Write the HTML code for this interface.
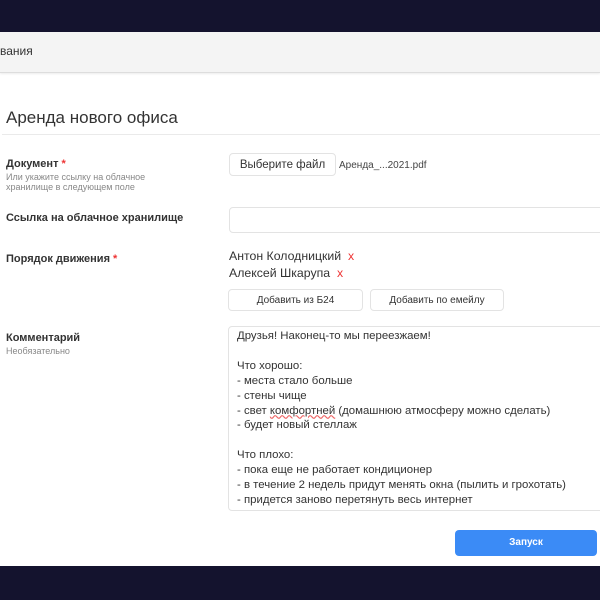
<html><head><style>
body{margin:0;width:600px;height:600px;overflow:hidden;background:#fff;font-family:"Liberation Sans",sans-serif;position:relative;color:#333}
.a{position:absolute}
.btn{position:absolute;border:1px solid #e3e3e3;border-radius:4px;background:#fff;font-size:11px;text-align:center;box-sizing:border-box;color:#333}
.lbl{font-size:11px;font-weight:bold;color:#333}
.sub{font-size:9px;color:#888;line-height:10px}
.r{color:#e33}
</style></head><body>
<div class="a" style="left:0;top:0;width:600px;height:32px;background:#14132e"></div>
<div class="a" style="left:0;top:32px;width:600px;height:40px;background:#f4f4f4;border-bottom:1px solid #ddd;box-shadow:0 1px 2px rgba(0,0,0,.08)"></div>
<div class="a" style="left:0;top:44px;font-size:12px;color:#333">вания</div>
<div class="a" style="left:6px;top:108px;font-size:17px;color:#333">Аренда нового офиса</div>
<div class="a" style="left:2px;top:134px;width:598px;height:1px;background:#eaeaea"></div>
<div class="a lbl" style="left:6px;top:158px">Документ <span class="r">*</span></div>
<div class="a sub" style="left:6px;top:172px">Или укажите ссылку на облачное<br>хранилище в следующем поле</div>
<div class="btn" style="left:229px;top:153px;width:107px;height:23px;line-height:22px;font-size:11.5px">Выберите файл</div>
<div class="a" style="left:339px;top:160px;font-size:10px;color:#444">Аренда_...2021.pdf</div>
<div class="a lbl" style="left:6px;top:212px">Ссылка на облачное хранилище</div>
<div class="btn" style="left:229px;top:207px;width:380px;height:26px"></div>
<div class="a lbl" style="left:6px;top:253px">Порядок движения <span class="r">*</span></div>
<div class="a" style="left:229px;top:249px;font-size:12.3px">Антон Колодницкий &nbsp;<span class="r">x</span></div>
<div class="a" style="left:229px;top:266px;font-size:12.3px">Алексей Шкарупа &nbsp;<span class="r">x</span></div>
<div class="btn" style="left:228px;top:289px;width:135px;height:22px;line-height:22px;font-size:10px">Добавить из Б24</div>
<div class="btn" style="left:370px;top:289px;width:134px;height:22px;line-height:22px;font-size:10px">Добавить по емейлу</div>
<div class="a lbl" style="left:6px;top:332px">Комментарий</div>
<div class="a sub" style="left:6px;top:346px">Необязательно</div>
<div class="btn" style="left:228px;top:326px;width:390px;height:185px;text-align:left;padding:2px 0 0 8px;font-size:11.4px;line-height:14.9px">Друзья! Наконец-то мы переезжаем!<br><br>Что хорошо:<br>- места стало больше<br>- стены чище<br>- свет <span style="text-decoration:underline wavy #e66">комфортней</span> (домашнюю атмосферу можно сделать)<br>- будет новый стеллаж<br><br>Что плохо:<br>- пока еще не работает кондиционер<br>- в течение 2 недель придут менять окна (пылить и грохотать)<br>- придется заново перетянуть весь интернет</div>
<div class="a" style="left:455px;top:530px;width:142px;height:26px;background:#3b8bf6;border-radius:4px;color:#fff;font-size:10px;font-weight:bold;text-align:center;line-height:26px">Запуск</div>
<div class="a" style="left:0;top:566px;width:600px;height:34px;background:#14132e"></div>
</body></html>
